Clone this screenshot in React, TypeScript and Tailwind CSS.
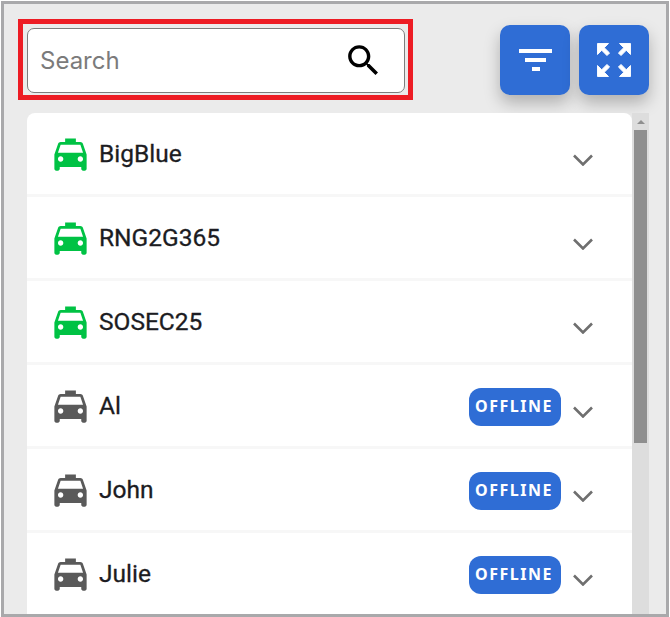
const vehicles = [
  { name: 'BigBlue', online: true },
  { name: 'RNG2G365', online: true },
  { name: 'SOSEC25', online: true },
  { name: 'Al', online: false },
  { name: 'John', online: false },
  { name: 'Julie', online: false },
]

function Taxi({ online }: { online: boolean }) {
  return (
    <svg viewBox="0 0 24 24" className={`mt-[2px] h-[43px] w-[43px] shrink-0 ${online ? 'text-[#00c244]' : 'text-[#5a5a5a]'}`} fill="currentColor">
      <path d="M18.92 6.01C18.72 5.42 18.16 5 17.5 5H15V3H9v2H6.5c-.66 0-1.21.42-1.42 1.01L3 12v8c0 .55.45 1 1 1h1c.55 0 1-.45 1-1v-1h12v1c0 .55.45 1 1 1h1c.55 0 1-.45 1-1v-8l-2.08-5.99zM6.500 16c-.83 0-1.500-.67-1.500-1.500S5.670 13 6.500 13s1.500.67 1.500 1.500S7.330 16 6.500 16zm11 0c-.83 0-1.500-.67-1.500-1.500s.67-1.500 1.500-1.500 1.500.67 1.500 1.500-.67 1.500-1.500 1.500zM5 11l1.500-4.500h11L19 11H5z" />
    </svg>
  )
}

function Chevron() {
  return (
    <svg viewBox="0 0 20 12" className="h-[12px] w-[20px]" fill="none" stroke="#6f6f6f" strokeWidth="2.6">
      <path d="M1 1.500l9 9 9-9" />
    </svg>
  )
}

function VehicleRow({ name, online }: { name: string; online: boolean }) {
  return (
    <div className="flex h-[84px] shrink-0 items-center border-b-[3px] border-[#f7f7f7] pl-[22px] pr-[39px]">
      <Taxi online={online} />
      <span className="ml-[7px] mt-[2px] font-['Roboto',sans-serif] text-[24.5px] font-normal leading-none text-[#1c1c22] [-webkit-text-stroke:0.3px_#1c1c22]">{name}</span>
      <div className="ml-auto flex items-center">
        {!online && (
          <span className="mr-[12px] mt-[2px] flex h-[38px] w-[92px] items-center justify-center rounded-[12px] bg-[#2f6dd5] pb-[2px] pr-[2px] font-['Noto_Sans',sans-serif] text-[16px] font-bold tracking-[1.5px] text-white">
            OFFLINE
          </span>
        )}
        <div className="mt-[12px]">
          <Chevron />
        </div>
      </div>
    </div>
  )
}

export default function App() {
  return (
    <div className="h-[617px] w-[670px] overflow-hidden bg-white pl-px pr-px pt-px">
      <div className="h-[616px] w-[668px] overflow-hidden border-[3px] border-[#a9a9ab] bg-[#ebebeb] pl-[14px] pr-[17px] pt-[15px]">
        <div className="flex items-start justify-between">
          <div className="h-[81px] w-[395px] border-[5px] border-[#ed1c24] p-[4px] pb-[2px] pr-[3px]">
            <div className="flex h-[65px] items-center justify-between rounded-[7px] border border-[#7d7d7d] bg-white pl-[12px] pr-[20px]">
              <span className="font-['Inter',sans-serif] text-[24px] text-[#7b7b7b]">Search</span>
              <svg viewBox="0 0 24 24" className="h-[41px] w-[41px]" fill="#000">
                <path d="M15.5 14h-.79l-.28-.27C15.41 12.59 16 11.110 16 9.500 16 5.910 13.090 3 9.500 3S3 5.910 3 9.500 5.910 16 9.500 16c1.610 0 3.090-.59 4.230-1.570l.27.28v.79l5 4.990L20.490 19l-4.990-5zm-6 0C7.010 14 5 11.990 5 9.500S7.010 5 9.500 5 14 7.010 14 9.500 11.990 14 9.500 14z" />
              </svg>
            </div>
          </div>
          <div className="mt-[6px] flex gap-[9px]">
            <button className="flex h-[70px] w-[70px] items-center justify-center rounded-[10px] bg-[#2f6dd5] shadow-[0_8px_16px_rgba(0,0,0,0.25)]">
              <svg viewBox="0 0 33 22" className="h-[22px] w-[33px]" fill="#fff">
                <path d="M0 0h33v4H0zM6 9h21v4H6zM13 18h8v4h-8z" />
              </svg>
            </button>
            <button className="flex h-[70px] w-[70px] items-center justify-center rounded-[10px] bg-[#2f6dd5] shadow-[0_8px_16px_rgba(0,0,0,0.25)]">
              <svg viewBox="0 0 24 24" className="h-[44px] w-[44px]" fill="#fff" stroke="#fff" strokeWidth="0.5">
                <path d="M15 3l2.300 2.300-2.890 2.870 1.420 1.420L18.700 6.700 21 9V3zM3 9l2.300-2.300 2.870 2.890 1.420-1.420L6.700 5.300 9 3H3zm6 12l-2.300-2.300 2.890-2.870-1.420-1.420L5.300 17.300 3 15v6zm12-6l-2.300 2.300-2.870-2.890-1.420 1.420 2.890 2.870L15 21h6z" />
              </svg>
            </button>
          </div>
        </div>
        <div className="mt-[13px] flex h-[520px] pl-[9px]">
          <div className="flex h-full w-[605px] flex-col overflow-hidden rounded-t-[8px] bg-white">
            {vehicles.map((v) => (
              <VehicleRow key={v.name} name={v.name} online={v.online} />
            ))}
          </div>
          <div className="h-full w-[17px] bg-[#dddddd] px-[2px]">
            <div className="flex h-[17px] items-center justify-center">
              <div className="h-0 w-0 border-x-[4px] border-b-[4px] border-x-transparent border-b-[#8f8f8f]" />
            </div>
            <div className="h-[313px] w-[13px] bg-[#8f8f8f]" />
          </div>
        </div>
      </div>
    </div>
  )
}
